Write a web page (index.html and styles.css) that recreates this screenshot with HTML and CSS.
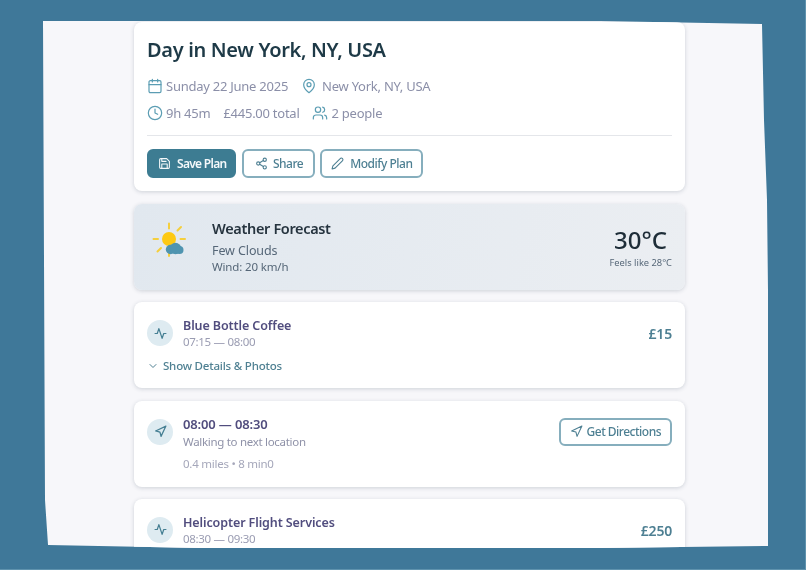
FILE: index.html
```html
<!DOCTYPE html>
<html>
    <head>
        <link rel="stylesheet" href="styles.css">
    </head>
    <body>
        <div class="sheet">
            <div class="plan">
                <div class="card head">
                    <h1>Day in New York, NY, USA</h1>
                    <div class="meta meta-one">
                        <span class="metaitem">
                            <svg class="ico" viewBox="0 0 24 24"><rect x="3" y="4" width="18" height="18" rx="2"/><path d="M16 2v4M8 2v4M3 10h18"/></svg>
                            Sunday 22 June 2025
                        </span>
                        <span class="metaitem wide">
                            <svg class="ico" viewBox="0 0 24 24"><path d="M20 10c0 6-8 12-8 12s-8-6-8-12a8 8 0 0 1 16 0z"/><circle cx="12" cy="10" r="3"/></svg>
                            New York, NY, USA
                        </span>
                    </div>
                    <div class="meta meta-two">
                        <span class="metaitem">
                            <svg class="ico" viewBox="0 0 24 24"><circle cx="12" cy="12" r="10"/><path d="M12 6v6l4 2"/></svg>
                            9h 45m
                        </span>
                        <span class="metaitem">£445.00 total</span>
                        <span class="metaitem people">
                            <svg class="ico" viewBox="0 0 24 24"><path d="M16 21v-2a4 4 0 0 0-4-4H6a4 4 0 0 0-4 4v2"/><circle cx="9" cy="7" r="4"/><path d="M22 21v-2a4 4 0 0 0-3-3.870M16 3.130a4 4 0 0 1 0 7.750"/></svg>
                            2 people
                        </span>
                    </div>
                    <div class="actions">
                        <a class="btn btn-main">
                            <svg viewBox="0 0 24 24"><path d="M19 21H5a2 2 0 0 1-2-2V5a2 2 0 0 1 2-2h11l5 5v11a2 2 0 0 1-2 2z"/><path d="M17 21v-8H7v8M7 3v5h8"/></svg>
                            Save Plan
                        </a>
                        <a class="btn btn-share">
                            <svg viewBox="0 0 24 24"><circle cx="18" cy="5" r="3"/><circle cx="6" cy="12" r="3"/><circle cx="18" cy="19" r="3"/><path d="M8.600 13.500l6.800 4M15.400 6.500l-6.800 4"/></svg>
                            Share
                        </a>
                        <a class="btn">
                            <svg viewBox="0 0 24 24"><path d="M17 3a2.850 2.830 0 1 1 4 4L7.500 20.500 2 22l1.500-5.500z"/></svg>
                            Modify Plan
                        </a>
                    </div>
                </div>

                <div class="card weather">
                    <svg class="sun" viewBox="0 0 38 38">
                        <path class="rays" d="M19 3.500v5M31 7l-3.500 3.500M35 19h-4.500M3.500 19h4.500M11 28l-3.500 3.500M19 33v3"/>
                        <circle class="disc" cx="19" cy="19" r="7"/>
                        <g class="cloud">
                            <circle cx="20.500" cy="29.500" r="4.700"/>
                            <circle cx="25.500" cy="28.500" r="5.800"/>
                            <circle cx="29.500" cy="30" r="4"/>
                        </g>
                    </svg>
                    <div class="wtext">
                        <h2>Weather Forecast</h2>
                        <div class="wsky">Few Clouds</div>
                        <div class="wwind">Wind: 20 km/h</div>
                    </div>
                    <div class="temp">
                        <div class="deg">30°C</div>
                        <div class="feels">Feels like 28°C</div>
                    </div>
                </div>

                <div class="card item">
                    <div class="row">
                        <span class="bubble"><svg viewBox="0 0 24 24"><path d="M22 12h-4l-3 9L9 3l-3 9H2"/></svg></span>
                        <div class="itemtext">
                            <div class="name">Blue Bottle Coffee</div>
                            <div class="time">07:15 — 08:00</div>
                        </div>
                        <div class="price">£15</div>
                    </div>
                    <div class="more">
                        <svg viewBox="0 0 24 24"><path d="M6 9l6 6 6-6"/></svg>
                        Show Details &amp; Photos
                    </div>
                </div>

                <div class="card item">
                    <div class="row">
                        <span class="bubble"><svg viewBox="0 0 24 24"><path d="M3 11l19-9-9 19-2-8z"/></svg></span>
                        <div class="itemtext">
                            <div class="name name-big">08:00 — 08:30</div>
                            <div class="walk">Walking to next location</div>
                            <div class="dist">0.4 miles • 8 min0</div>
                        </div>
                        <a class="btn btn-go">
                            <svg viewBox="0 0 24 24"><path d="M3 11l19-9-9 19-2-8z"/></svg>
                            Get Directions
                        </a>
                    </div>
                </div>

                <div class="card item">
                    <div class="row">
                        <span class="bubble"><svg viewBox="0 0 24 24"><path d="M22 12h-4l-3 9L9 3l-3 9H2"/></svg></span>
                        <div class="itemtext">
                            <div class="name">Helicopter Flight Services</div>
                            <div class="time">08:30 — 09:30</div>
                        </div>
                        <div class="price">£250</div>
                    </div>
                </div>
            </div>
        </div>
    </body>
</html>
```

FILE: styles.css
```css
html,body{
    margin:0;
    height:570px;
    overflow:hidden;
}
body{
    background-color:#3f7899;
    font-family:"Noto Sans",sans-serif;
    padding:20px 0 0 43px;
    box-sizing:border-box;
    border-right:1px solid #5f93ae;
    border-bottom:1px solid #5f93ae;
}
.sheet{
    width:725px;
    height:528px;
    background-color:#f7f7fa;
    overflow:hidden;
    clip-path:polygon(0 1px,557px 1px,719px 4px,721px 100px,724px 180px,725px 270px,725px 526px,557px 528px,157px 528px,5px 525px,2px 480px);
}
.plan{
    margin-left:91px;
    width:551px;
    display:flex;
    flex-direction:column;
    gap:12.300px;
    padding-top:2px;
    filter:blur(0.35px);
}
.card{
    background-color:#fff;
    border-radius:8px;
    box-shadow:0 1px 4px rgba(40,60,80,0.2);
    box-sizing:border-box;
    flex:none;
}
.head{
    height:169px;
    margin-bottom:0.700px;
    padding:14px 13px 0 13px;
}
h1{
    margin:0;
    font-size:20px;
    line-height:28px;
    font-weight:600;
    letter-spacing:-0.33px;
    color:#1e3a47;
}
.meta{
    display:flex;
    gap:13px;
    color:#8b8fa8;
    font-size:13px;
    line-height:18px;
    letter-spacing:-0.25px;
}
.meta-one{
    margin-top:13px;
}
.meta-two{
    margin-top:9px;
    padding-bottom:13px;
    border-bottom:1px solid #e4e6ea;
}
.metaitem{
    display:flex;
    align-items:center;
    gap:3px;
}
.wide{
    gap:5px;
}
.people{
    gap:4px;
    margin-left:-1px;
}
.ico{
    width:16px;
    height:16px;
    fill:none;
    stroke:#5b9db3;
    stroke-width:1.800;
    stroke-linecap:round;
    stroke-linejoin:round;
}
.actions{
    display:flex;
    gap:5.500px;
    margin-top:13px;
}
.btn{
    display:flex;
    align-items:center;
    gap:6px;
    height:29px;
    box-sizing:border-box;
    padding:0 9px;
    border:2px solid #86aebd;
    border-radius:6px;
    color:#4d7f92;
    font-size:12px;
    font-weight:500;
    letter-spacing:-0.5px;
    flex:none;
}
.btn svg{
    width:13px;
    height:13px;
    fill:none;
    stroke:currentColor;
    stroke-width:2;
    stroke-linecap:round;
    stroke-linejoin:round;
}
.btn-main{
    background-color:#3d7c92;
    border-color:#3d7c92;
    color:#f4f8fa;
    font-weight:600;
    letter-spacing:-0.7px;
    padding-right:8px;
}
.btn-share{
    gap:5px;
    padding:0 9.500px 0 11px;
}
.btn-go{
    gap:4px;
    height:28px;
    align-self:flex-start;
    margin-top:2px;
}
.weather{
    height:86px;
    display:flex;
    align-items:center;
    padding:0 13px 0 16px;
    background:linear-gradient(100deg,#e1e8ef,#ebeef2);
}
.sun{
    width:38px;
    height:38px;
    flex:none;
    align-self:flex-start;
    margin-top:16px;
}
.rays{
    fill:none;
    stroke:#f5cf3d;
    stroke-width:2;
    stroke-linecap:round;
}
.disc{
    fill:#fdc913;
}
.cloud{
    fill:#4f94b0;
}
.wtext{
    margin-left:24px;
    flex:1;
}
h2{
    margin:0;
    font-size:14.500px;
    line-height:20px;
    font-weight:600;
    letter-spacing:-0.35px;
    color:#26343f;
}
.wsky{
    margin-top:4px;
    font-size:12.500px;
    line-height:18px;
    letter-spacing:-0.1px;
    color:#566778;
}
.wwind{
    margin-top:-1px;
    font-size:11.500px;
    line-height:16px;
    letter-spacing:-0.15px;
    color:#566778;
}
.temp{
    text-align:right;
}
.deg{
    font-size:24px;
    line-height:30px;
    font-weight:500;
    padding-right:5px;
    color:#1e2d38;
}
.feels{
    margin-top:1px;
    font-size:9.300px;
    line-height:13px;
    color:#566778;
}
.item{
    height:86px;
    padding:15px 13px 0 13px;
}
.row{
    display:flex;
    gap:10px;
}
.bubble{
    width:26px;
    height:26px;
    border-radius:50%;
    background-color:#deebf1;
    display:flex;
    align-items:center;
    justify-content:center;
    flex:none;
    margin-top:3px;
}
.bubble svg{
    width:13px;
    height:13px;
    fill:none;
    stroke:#457f93;
    stroke-width:2.300;
    stroke-linecap:round;
    stroke-linejoin:round;
}
.itemtext{
    flex:1;
}
.name{
    font-size:12.500px;
    line-height:18px;
    font-weight:600;
    letter-spacing:-0.1px;
    color:#514d7e;
}
.name-big{
    margin-top:-1px;
    font-size:13px;
    letter-spacing:-0.15px;
}
.time{
    margin-top:-1px;
    font-size:11.500px;
    line-height:16px;
    letter-spacing:-0.3px;
    color:#9a9cb2;
}
.walk{
    margin-top:1px;
    font-size:11.500px;
    line-height:16px;
    letter-spacing:-0.3px;
    color:#8f92a8;
}
.dist{
    margin-top:6px;
    font-size:11.500px;
    line-height:16px;
    letter-spacing:-0.25px;
    color:#a5a7ba;
}
.price{
    font-size:14px;
    line-height:34px;
    font-weight:600;
    letter-spacing:-0.2px;
    color:#4d7f92;
}
.more{
    display:flex;
    align-items:center;
    gap:4px;
    margin-top:7px;
    font-size:11.500px;
    font-weight:500;
    line-height:16px;
    letter-spacing:-0.2px;
    color:#4f8092;
}
.more svg{
    width:12px;
    height:12px;
    fill:none;
    stroke:currentColor;
    stroke-width:2;
    stroke-linecap:round;
    stroke-linejoin:round;
}
```
